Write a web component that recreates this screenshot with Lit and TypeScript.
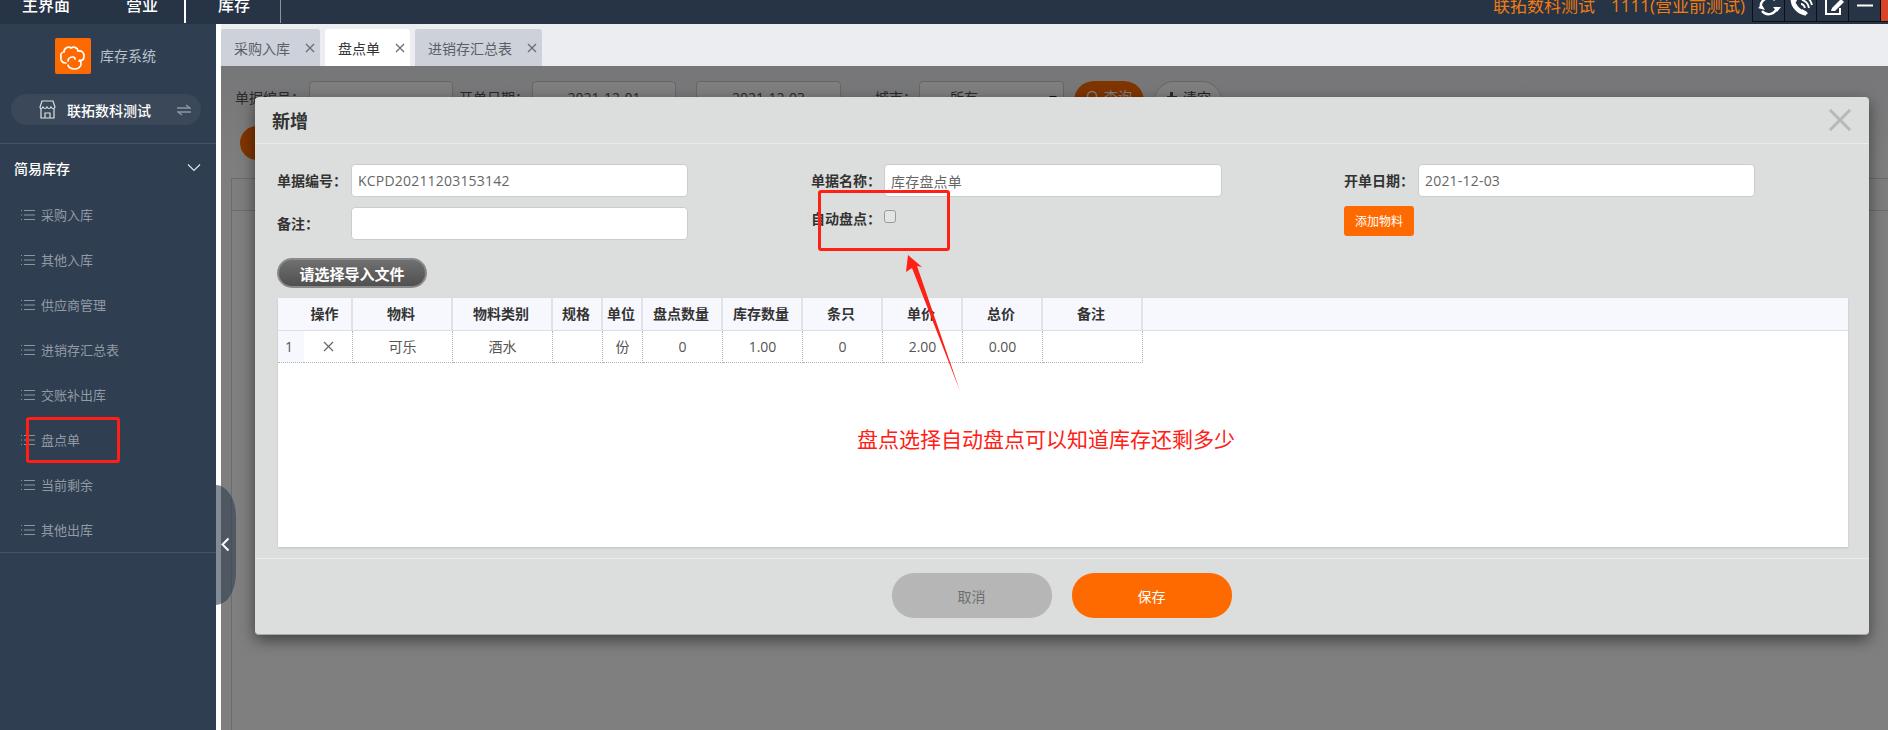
import { LitElement, html, css } from "lit";
import { customElement } from "lit/decorators.js";

const closeIcon = html`<svg class="tx" viewBox="0 0 10 10"><path d="M1 1l8 8M9 1l-8 8" stroke="currentColor" stroke-width="1.3" fill="none"/></svg>`;
const listIcon = html`<svg class="li" viewBox="0 0 14 12"><path d="M3 1.5h11M3 6h11M3 10.5h11" stroke="currentColor" stroke-width="1"/><path d="M0 1.5h1.5M0 6h1.5M0 10.5h1.5" stroke="currentColor" stroke-width="1" stroke-dasharray="1 .5"/></svg>`;

const menu = ["采购入库", "其他入库", "供应商管理", "进销存汇总表", "交账补出库", "盘点单", "当前剩余", "其他出库"];
const cols = [
  { h: "操作", w: 75, v: "" },
  { h: "物料", w: 100, v: "可乐" },
  { h: "物料类别", w: 100, v: "酒水" },
  { h: "规格", w: 50, v: "" },
  { h: "单位", w: 40, v: "份" },
  { h: "盘点数量", w: 80, v: "0" },
  { h: "库存数量", w: 80, v: "1.00" },
  { h: "条只", w: 80, v: "0" },
  { h: "单价", w: 80, v: "2.00" },
  { h: "总价", w: 80, v: "0.00" },
  { h: "备注", w: 100, v: "" },
];

@customElement("app-root")
export class AppRoot extends LitElement {
  static styles = css`
    :host { display: block; width: 1888px; height: 730px; overflow: hidden; position: relative; font-family: "Open Sans", "Noto Sans CJK SC", sans-serif; font-size: 14px; color: #444; }
    * { box-sizing: border-box; }
    .top { height: 24px; background: #273445; display: flex; align-items: flex-start; overflow: hidden; color: #fff; }
    .nav { font-size: 16px; line-height: 16px; margin-top: -3px; font-weight: 500; }
    .n1 { margin-left: 22px; } .n2 { margin-left: 56px; } .n3 { margin-left: 32px; }
    .vline { width: 1px; height: 23px; }
    .v1 { margin-left: 26px; background: #fff; width: 2px; } .v2 { margin-left: 30px; background: #8d949d; }
    .who { margin-left: auto; margin-right: 7px; margin-top: -4px; font-size: 17px; line-height: 20px; color: #f07c12; display: flex; gap: 16px; }
    .tools { display: flex; height: 22px; border-bottom: 1px solid #0c0f14; border-left: 0; }
    .tool { width: 32px; border-left: 1px solid #0c0f14; overflow: hidden; display: flex; justify-content: center; }
    .tool svg { width: 24px; height: 21px; display: block; flex: none; }
    .tool.red { width: 8px; background: #d8432a; }
    .body { display: flex; height: 706px; }
    .side { width: 216px; background: #2f3e50; flex: none; }
    .brand { display: flex; align-items: flex-start; gap: 9px; padding: 14px 0 0 55px; height: 70px; color: #b9c2cc; font-size: 14px; line-height: 36px; }
    .brand svg { width: 36px; height: 36px; display: block; }
    .store { margin: 0 15px 0 11px; height: 31px; border-radius: 16px; background: #3a4859; display: flex; align-items: center; color: #fff; font-weight: 500; padding-left: 28px; }
    .store .s { width: 17px; height: 19px; margin-right: 11px; }
    .store .sw { width: 14px; height: 12px; margin-left: 26px; color: #8c97a3; }
    .div1 { height: 1px; background: #465464; margin-top: 18px; }
    .group { height: 48px; display: flex; align-items: center; justify-content: space-between; padding: 0 14px; color: #fff; font-size: 14px; font-weight: 500; }
    .group svg { width: 16px; height: 10px; }
    .menu { border-bottom: 1px solid #465464; }
    .mi { height: 45px; display: flex; align-items: center; padding-left: 21px; gap: 6px; color: #919ba6; font-size: 13px; }
    .li { width: 14px; height: 12px; flex: none; color: #8b95a0; }
    .gutter { width: 5px; background: #fff; flex: none; }
    .main { flex: 1; display: flex; flex-direction: column; min-width: 0; }
    .tabs { height: 42px; background: #ecedf1; display: flex; align-items: flex-end; gap: 5px; flex: none; }
    .tab { height: 37px; border-radius: 3px 3px 0 0; background: #cdd1da; display: flex; align-items: center; color: #5b5f66; font-size: 14px; padding-left: 13px; position: relative; }
    .tab.on { background: #fff; color: #333; }
    .tab .tx { position: absolute; right: 5px; top: 14px; }
    .tx { width: 10px; height: 10px; color: #6a6d73; }
    .page { flex: 1; background: linear-gradient(#ecedf1, #fdfdfd 105px); padding-left: 10px; min-height: 0; overflow: hidden; }
    .filter { height: 45px; padding-top: 15px; display: flex; align-items: flex-start; }
    .flabel { color: #555; line-height: 33px; white-space: nowrap; }
    .fbox { height: 33px; border: 1px solid #ccc; border-radius: 4px; background: #fff; text-align: center; line-height: 31px; color: #555; }
    .fsel { text-align: left; padding-left: 30px; display: flex; justify-content: space-between; padding-right: 6px; }
    .caret { width: 0; height: 0; border: 4px solid transparent; border-top-color: #222; border-bottom: 0; margin-top: 14px; }
    .fbtn { height: 40px; border-radius: 20px; line-height: 31px; display: flex; align-items: flex-start; justify-content: center; gap: 4px; }
    .fbtn svg { width: 14px; height: 14px; margin-top: 9px; }
    .orange { background: #ff6a00; color: #fff; }
    .plain { background: #fff; border: 1px solid #ccc; }
    .pill { width: 100px; height: 34px; border-radius: 17px; background: #ff6a00; margin: 15px 0 18px 9px; }
    .card { border: 1px solid #d8d8d8; border-right: 0; height: 700px; background: #fff; }
    .cardh { height: 32px; border-bottom: 1px solid #d8d8d8; background: #fbfbfb; }
    .overlay { position: absolute; left: 221px; right: 0; top: 66px; bottom: 0; background: rgba(0,0,0,.5); }
    .handle { position: absolute; left: 216px; top: 485px; width: 20px; height: 120px; background: rgba(47,62,80,.6); border-radius: 0 20px 20px 0 / 0 32px 32px 0; display: flex; align-items: center; padding-left: 5px; }
    .handle svg { width: 9px; height: 15px; margin-top: -1px; }
    .modal { position: absolute; left: 255px; top: 97px; width: 1614px; height: 538px; background: #dcdedd; border-radius: 4px; border-bottom: 1px solid #a8a8a8; box-shadow: 0 5px 15px rgba(0,0,0,.5); display: flex; flex-direction: column; }
    .mh { height: 47px; flex: none; border-bottom: 1px solid #e9ebea; display: flex; align-items: center; justify-content: space-between; padding: 0 18px 0 17px; font-size: 18px; font-weight: 700; color: #333; }
    .mh svg { width: 22px; height: 22px; color: #b7b9b8; }
    .mb { height: 414px; flex: none; padding: 20px 0 0 22px; }
    .form { display: grid; grid-template-columns: 74px 337px 123px 73px 338px 122px 74px 337px; grid-template-rows: 33px 33px; row-gap: 10px; }
    .lab { font-weight: 700; color: #333; font-size: 14px; line-height: 33px; white-space: nowrap; }
    .form input[type=text] { border: 1px solid #ccc; border-radius: 4px; background: #fff; padding: 0 6px; font: inherit; letter-spacing: .2px; color: #666; outline: none; width: 100%; height: 33px; }
    .chk { appearance: none; margin: 3px 0 0; width: 12px; height: 13px; display: block; background: #e3e4e4; border: 1px solid #9a9a9a; border-radius: 3px; }
    .cb1 { grid-column: 4; line-height: 23px; } .cb2 { grid-column: 5; } .cb3 { grid-column: 7 / span 2; }
    .add { width: 70px; height: 30px; border: 0; border-radius: 3px; background: #ff6a00; color: #fff; font: inherit; font-size: 12px; padding: 0; margin-top: -1px; }
    .imp { display: block; width: 150px; height: 30px; margin-top: 18px; border-radius: 15px; border: 2px solid #8a8a8a; background: linear-gradient(#707070, #505050); color: #fff; font: inherit; font-size: 15px; font-weight: 700; padding: 0; }
    .tbl { margin: 10px 0 0 1px; width: 1570px; height: 249px; background: #fff; box-shadow: 0 1px 2px rgba(0,0,0,.12); }
    .tr { display: flex; }
    .th-row { height: 33px; background: #f7f8fd; border-bottom: 1px solid #dcdfe6; }
    .th { border-right: 2px solid #e0e2e8; font-weight: 700; color: #333; font-size: 14px; text-align: center; line-height: 31px; padding-right: 2px; flex: none; }
    .th.first { padding-left: 26px; padding-right: 6px; }
    .td-row { height: 32px; }
    .td { flex: none; border-right: 1px dotted #b5b5b5; border-bottom: 1px dotted #b5b5b5; text-align: center; color: #555; font-size: 14px; line-height: 31px; display: flex; align-items: center; justify-content: center; }
    .idx { width: 26px; background: #f7f8fd; flex: none; border-bottom: 1px dotted #b5b5b5; line-height: 31px; padding-left: 7px; color: #555; }
    .td .x2 { width: 11px; height: 11px; color: #666; }
    .mf { flex: 1; border-top: 1px solid #e9ebea; display: flex; justify-content: center; align-items: flex-start; gap: 20px; padding: 14px 1px 0 0; }
    .fb { width: 160px; height: 45px; border: 0; border-radius: 22px; font: inherit; font-size: 14px; padding: 0; }
    .fb.no { background: #b6b6b6; color: #6f6f6f; } .fb.yes { background: #ff6a00; color: #fff; }
    .rect { position: absolute; border: 3px solid #ff2015; border-radius: 3px; }
    .r1 { left: 818px; top: 190px; width: 132px; height: 61px; }
    .r2 { left: 26px; top: 417px; width: 94px; height: 46px; }
    .note { position: absolute; left: 857px; top: 424px; font-size: 21px; line-height: 30px; color: #ff2015; white-space: nowrap; }
    .arrow { position: absolute; left: 900px; top: 250px; width: 70px; height: 145px; }
  `;

  render() {
    return html`
      <div class="top">
        <span class="nav n1">主界面</span><span class="nav n2">营业</span><span class="vline v1"></span>
        <span class="nav n3">库存</span><span class="vline v2"></span>
        <div class="who"><span>联拓数科测试</span><span>1111(营业前测试)</span></div>
        <div class="tools">
          <div class="tool"><svg viewBox="0 0 24 21" fill="none" stroke="#fff" stroke-width="2.4"><path d="M4 8a8.5 8.5 0 0 1 14-8"/><path d="M20 7a8.5 8.5 0 0 1-15 4"/><path d="M16 7h8l-4 5zM1 8l4-3 3 5z" fill="#fff" stroke="none"/></svg></div>
          <div class="tool"><svg viewBox="0 0 24 21" fill="none"><path d="M4 -2C3 5 9 12 17 13.500" stroke="#fff" stroke-width="4.500"/><path d="M13 9l6 4-2 2h-3zM2-2h5l1 3-3 2z" fill="#fff"/><path d="M12 4c2 0 3 1 4 4M13 0c4 1 6 3 7 8M16-3c4 1 6 4 7 8" stroke="#fff" stroke-width="1.800"/></svg></div>
          <div class="tool"><svg viewBox="0 0 24 21" fill="none" stroke="#fff" stroke-width="2"><path d="M19 8v6H5V0"/><path d="M10 11l1-3 9-9 3 3-9 9z" fill="#fff" stroke="none"/></svg></div>
          <div class="tool"><svg viewBox="0 0 24 21"><path d="M4 5.500h16" stroke="#fff" stroke-width="2"/></svg></div>
          <div class="tool red"></div>
        </div>
      </div>
      <div class="body">
        <aside class="side">
          <div class="brand">
            <svg viewBox="0 0 36 36"><rect width="36" height="36" rx="2" fill="#ff6a00"/><path d="M11 25c-4 0-6-3-5-6-1-3 1-5 3-5 0-4 4-6 7-4 3-2 7 0 7 3 4-1 6 2 6 5 0 3-2 5-5 5M13 27c0 2 3 4 6 4 4 0 7-2 7-5 0-1 0-3-1-4M13 23c0-2 2-4 5-4 1 0 2 1 2 2" fill="none" stroke="#fff" stroke-width="1.7" stroke-linecap="round"/></svg>
            <span>库存系统</span>
          </div>
          <div class="store">
            <svg class="s" viewBox="0 0 17 19" fill="none" stroke="#dfe3e7" stroke-width="1.2"><path d="M3 1h11l2 6c0 2-3 2-4 0-1 2-3 2-4 0-1 2-3 2-4 0-1 2-3 2-3 0z"/><path d="M2 9v9h13V9M6 18v-5h5v5"/></svg>
            <span>联拓数科测试</span>
            <svg class="sw" viewBox="0 0 14 12" fill="none" stroke="currentColor" stroke-width="1.3"><path d="M0 4h13L9 1M14 8H1l4 3"/></svg>
          </div>
          <div class="div1"></div>
          <div class="group"><span>简易库存</span><svg viewBox="0 0 16 10" fill="none" stroke="#dfe3e7" stroke-width="1.2"><path d="M2 1.500l6 6 6-6"/></svg></div>
          <div class="menu">${menu.map((m) => html`<div class="mi">${listIcon}<span>${m}</span></div>`)}</div>
        </aside>
        <div class="gutter"></div>
        <main class="main">
          <div class="tabs">
            <div class="tab" style="width:99px">采购入库${closeIcon}</div>
            <div class="tab on" style="width:85px">盘点单${closeIcon}</div>
            <div class="tab" style="width:127px">进销存汇总表${closeIcon}</div>
          </div>
          <div class="page">
            <div class="filter">
              <span class="flabel" style="margin-left:4px;width:74px">单据编号：</span>
              <div class="fbox" style="width:144px"></div>
              <span class="flabel" style="margin-left:6px;width:73px">开单日期：</span>
              <div class="fbox" style="width:144px">2021-12-01</div>
              <div class="fbox" style="width:145px;margin-left:20px">2021-12-03</div>
              <span class="flabel" style="margin-left:34px;width:44px">城市：</span>
              <div class="fbox fsel" style="width:145px"><span>所有</span><span class="caret"></span></div>
              <div class="fbtn orange" style="width:70px;margin-left:10px"><svg viewBox="0 0 14 14" fill="none" stroke="#fff" stroke-width="1.500"><circle cx="6" cy="6" r="4.500"/><path d="M9.500 9.500l3.500 3.500"/></svg><span>查询</span></div>
              <div class="fbtn plain" style="width:68px;margin-left:10px"><svg viewBox="0 0 14 14" fill="#555"><path d="M5 1h3v4h4v3H2V5h3zM3 9h8v4H3z"/></svg><span>清空</span></div>
            </div>
            <div class="pill"></div>
            <div class="card"><div class="cardh"></div></div>
          </div>
        </main>
      </div>
      <div class="overlay"></div>
      <div class="handle"><svg viewBox="0 0 9 15" fill="none" stroke="#fff" stroke-width="2"><path d="M7.500 1.500l-6 6 6 6"/></svg></div>
      <div class="modal">
        <div class="mh"><span>新增</span><svg viewBox="0 0 22 22" fill="none" stroke="currentColor" stroke-width="3"><path d="M1 1l20 20M21 1L1 21"/></svg></div>
        <div class="mb">
          <div class="form">
            <span class="lab">单据编号：</span><input type="text" .value=${"KCPD20211203153142"} />
            <span></span>
            <span class="lab">单据名称：</span><input type="text" .value=${"库存盘点单"} />
            <span></span>
            <span class="lab">开单日期：</span><input type="text" .value=${"2021-12-03"} />
            <span class="lab">备注：</span><input type="text" />
            <span class="lab cb1">自动盘点：</span>
            <div class="cb2"><input class="chk" type="checkbox" /></div>
            <div class="cb3"><button class="add">添加物料</button></div>
          </div>
          <button class="imp">请选择导入文件</button>
          <div class="tbl">
            <div class="tr th-row">
              ${cols.map((c, i) => html`<div class="th ${i === 0 ? "first" : ""}" style="width:${c.w}px">${c.h}</div>`)}
            </div>
            <div class="tr td-row">
              <div class="idx">1</div>
              ${cols.map((c, i) => html`<div class="td" style="width:${i === 0 ? c.w - 26 : c.w}px">${i === 0 ? html`<svg class="x2" viewBox="0 0 11 11"><path d="M1 1l9 9M10 1l-9 9" stroke="currentColor" stroke-width="1.2" fill="none"/></svg>` : c.v}</div>`)}
            </div>
          </div>
        </div>
        <div class="mf"><button class="fb no">取消</button><button class="fb yes">保存</button></div>
      </div>
      <div class="rect r1"></div>
      <div class="rect r2"></div>
      <svg class="arrow" viewBox="900 250 70 145"><polygon points="908,255 922,267 917,266 960,391 912,268 906,272" fill="#ff2015"/></svg>
      <div class="note">盘点选择自动盘点可以知道库存还剩多少</div>
    `;
  }
}
